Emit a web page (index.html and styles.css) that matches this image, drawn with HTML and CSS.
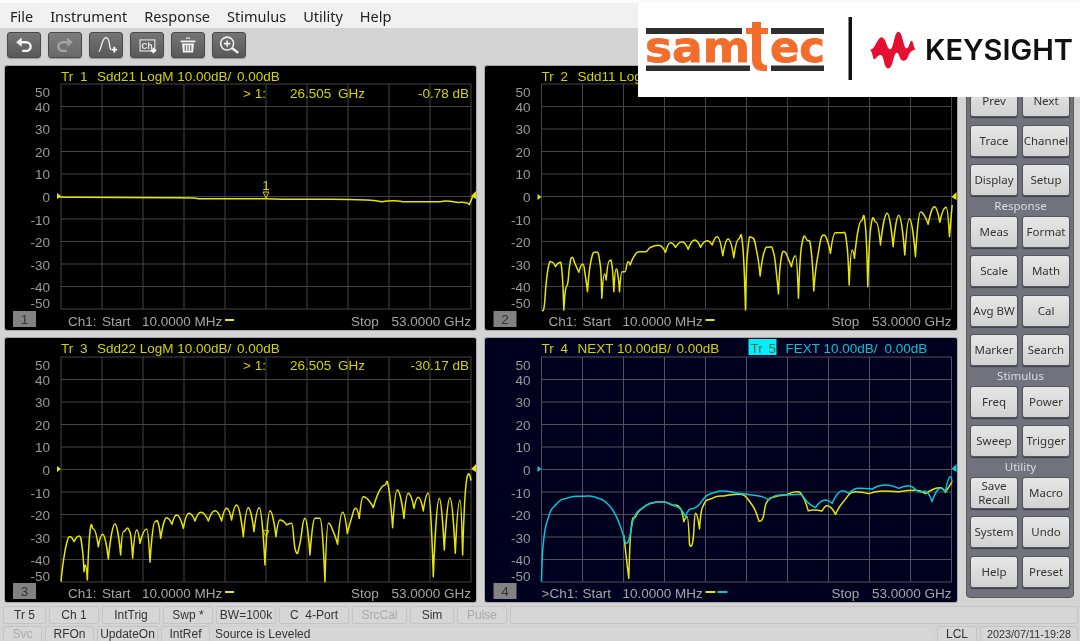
FILE: index.html
```html
<!DOCTYPE html>
<html lang="en">
  <head>
    <meta charset="UTF-8" />
    <meta name="viewport" content="width=device-width, initial-scale=1.0" />
    <title>Network Analyzer</title>
    <link rel="stylesheet" href="styles.css">
  </head>
  <body>
    <div class="app">
      <nav class="menu-bar">
        <span>File</span>
        <span>Instrument</span>
        <span>Response</span>
        <span>Stimulus</span>
        <span>Utility</span>
        <span>Help</span>
      </nav>

      <div class="tool-bar">
        <button class="tool-btn">
          <svg viewBox="0 0 34 26"><path class="ico-line" d="M13 10h6.500a4.700 4.700 0 0 1 0 9.400H15"/><path class="ico-fill" d="M8.500 10l6-5v10z"/></svg>
        </button>
        <button class="tool-btn off">
          <svg viewBox="0 0 34 26"><path class="ico-line" d="M21 10h-6.500a4.700 4.700 0 0 0 0 9.400H19"/><path class="ico-fill" d="M25.500 10l-6-5v10z"/></svg>
        </button>
        <button class="tool-btn">
          <svg viewBox="0 0 34 26"><path class="ico-thin" d="M9 20c3 0 3-15 8-15s3 12 5.500 13"/><path class="ico-plus" d="M26 15v6M23 18h6"/></svg>
        </button>
        <button class="tool-btn">
          <svg viewBox="0 0 34 26"><rect class="ico-box" x="9.500" y="7.500" width="16" height="12"/><text class="ico-text" x="11" y="17">Ch</text><path class="ico-plus" d="M24 16v6M21 19h6"/></svg>
        </button>
        <button class="tool-btn">
          <svg viewBox="0 0 34 26"><path class="ico-fill" d="M9 8h16v2H9zM14.500 6.500a2.500 2 0 0 1 5 0h-1.500a1 .8 0 0 0-2 0zM10.500 11.500h13l-1 9.500h-11z"/><path class="ico-cut" d="M14 13v6.500M17 13v6.500M20 13v6.500"/></svg>
        </button>
        <button class="tool-btn">
          <svg viewBox="0 0 34 26"><circle class="ico-ring" cx="15" cy="11.500" r="7"/><path class="ico-ring" d="M11.500 11.500h7M15 8v7"/><path class="ico-line" d="M20.500 16.500l6.500 5"/></svg>
        </button>
      </div>

      <div class="work-area">
        <div class="charts">
          <section class="chart">
            <svg viewBox="0 0 471 264">
              <defs>
                <path id="grid" d="M56 0H466V225H56ZM97 0V225M138 0V225M179 0V225M220 0V225M261 0V225M302 0V225M343 0V225M384 0V225M425 0V225M56 22.500H466M56 45H466M56 67.500H466M56 90H466M56 112.500H466M56 135H466M56 157.500H466M56 180H466M56 202.500H466"/>
              </defs>
              <g transform="translate(0 18)">
                <use class="grid-line" href="#grid"/>
                <text class="axis"><tspan x="45" y="13">50</tspan><tspan x="45" y="28">40</tspan><tspan x="45" y="50">30</tspan><tspan x="45" y="72.500">20</tspan><tspan x="45" y="95">10</tspan><tspan x="45" y="118">0</tspan><tspan x="45" y="140.500">-10</tspan><tspan x="45" y="163">-20</tspan><tspan x="45" y="185.500">-30</tspan><tspan x="45" y="208">-40</tspan><tspan x="45" y="224">-50</tspan></text>
              </g>
              <text class="label"><tspan x="56" y="14.500">Tr</tspan><tspan x="75" y="14.500">1</tspan><tspan x="92" y="14.500">Sdd21 LogM 10.00dB/</tspan><tspan x="232" y="14.500">0.00dB</tspan></text>
              <text class="label"><tspan x="238" y="32">&gt; 1:</tspan><tspan x="285" y="32">26.505</tspan><tspan x="333" y="32">GHz</tspan></text>
              <text class="label end" x="464" y="32">-0.78 dB</text>
              <path class="mark" d="M52 127l4 3-4 3zM471 125l-5 5 5 3z"/>
              <text class="label mid" x="261" y="124">1</text>
              <path class="mark-open" d="M258 126h6l-3 6z"/>
              <g transform="translate(-5 -6) scale(.3333)">
                <path class="trace yellow" data-points="175,411 235,412 500,413 580,414 595,416 800,416 850,418 950,418 1100,420 1145,425 1180,422 1210,425 1320,425 1340,423 1370,427 1400,428 1408,434 1418,410"/>
              </g>
              <rect class="num-box" x="8" y="245" width="23" height="16"/>
              <text class="num" x="19.500" y="258">1</text>
              <text class="foot"><tspan x="63" y="260">Ch1:</tspan><tspan x="97" y="260">Start</tspan><tspan x="137" y="260">10.0000 MHz</tspan></text>
              <text class="foot" x="346" y="260">Stop</text>
              <text class="foot end" x="466" y="260">53.0000 GHz</text>
              <path class="dash-y" d="M220 254h9"/>
            </svg>
          </section>

          <section class="chart">
            <svg viewBox="0 0 471 264">
              <g transform="translate(0 18)">
                <use class="grid-line" href="#grid"/>
                <text class="axis"><tspan x="45" y="13">50</tspan><tspan x="45" y="28">40</tspan><tspan x="45" y="50">30</tspan><tspan x="45" y="72.500">20</tspan><tspan x="45" y="95">10</tspan><tspan x="45" y="118">0</tspan><tspan x="45" y="140.500">-10</tspan><tspan x="45" y="163">-20</tspan><tspan x="45" y="185.500">-30</tspan><tspan x="45" y="208">-40</tspan><tspan x="45" y="224">-50</tspan></text>
              </g>
              <text class="label"><tspan x="56" y="14.500">Tr</tspan><tspan x="75" y="14.500">2</tspan><tspan x="92" y="14.500">Sdd11 LogM 10.00dB/</tspan><tspan x="232" y="14.500">0.00dB</tspan></text>
              <path class="mark" d="M52 128l4 3-4 3zM471 126l-5 5 5 3z"/>
              <g transform="translate(0 24) scale(.3333)">
                <path class="trace yellow" data-points="170,660 176,650 182,580 190,525 198,516 210,530 222,518 230,550 235,660 240,600 247,578 252,530 260,502 268,520 280,547 292,522 300,560 306,605 315,520 330,487 345,530 349,625 357,552 362,570 372,512 380,530 385,605 392,537 398,560 402,605 410,545 418,545 428,515 434,525 445,500 460,485 480,485 495,472 520,466 540,487 555,458 570,472 590,455 608,478 628,450 645,472 665,452 680,465 695,440 712,497 728,447 745,503 760,447 772,470 780,660 785,500 800,443 815,490 824,558 835,490 850,472 865,490 875,570 879,612 885,520 897,485 908,505 918,530 930,497 939,625 948,470 968,452 978,490 985,603 995,510 1015,435 1035,490 1050,428 1072,428 1085,470 1091,585 1100,480 1107,505 1128,392 1140,410 1147,590 1155,420 1172,397 1185,465 1205,370 1223,470 1240,376 1258,495 1272,386 1290,500 1305,366 1328,403 1347,350 1363,397 1382,352 1392,440 1400,345"/>
              </g>
              <rect class="num-box" x="8" y="245" width="23" height="16"/>
              <text class="num" x="19.500" y="258">2</text>
              <text class="foot"><tspan x="63" y="260">Ch1:</tspan><tspan x="97" y="260">Start</tspan><tspan x="137" y="260">10.0000 MHz</tspan></text>
              <text class="foot" x="346" y="260">Stop</text>
              <text class="foot end" x="466" y="260">53.0000 GHz</text>
              <path class="dash-y" d="M220 254h9"/>
            </svg>
          </section>

          <section class="chart">
            <svg viewBox="0 0 471 264">
              <g transform="translate(0 19)">
                <use class="grid-line" href="#grid"/>
                <text class="axis"><tspan x="45" y="13">50</tspan><tspan x="45" y="28">40</tspan><tspan x="45" y="50">30</tspan><tspan x="45" y="72.500">20</tspan><tspan x="45" y="95">10</tspan><tspan x="45" y="118">0</tspan><tspan x="45" y="140.500">-10</tspan><tspan x="45" y="163">-20</tspan><tspan x="45" y="185.500">-30</tspan><tspan x="45" y="208">-40</tspan><tspan x="45" y="224">-50</tspan></text>
              </g>
              <text class="label"><tspan x="56" y="14.500">Tr</tspan><tspan x="75" y="14.500">3</tspan><tspan x="92" y="14.500">Sdd22 LogM 10.00dB/</tspan><tspan x="232" y="14.500">0.00dB</tspan></text>
              <text class="label"><tspan x="238" y="32">&gt; 1:</tspan><tspan x="285" y="32">26.505</tspan><tspan x="333" y="32">GHz</tspan></text>
              <text class="label end" x="464" y="32">-30.17 dB</text>
              <path class="mark" d="M52 128l4 3-4 3zM471 126l-5 5 5 3z"/>
              <g transform="translate(-5 -3) scale(.3333)">
                <path class="trace yellow" data-points="183,740 190,680 200,625 210,605 222,620 238,603 248,650 252,710 256,690 262,735 270,590 280,582 295,635 308,598 325,672 345,567 362,660 370,590 390,592 398,670 410,585 420,625 440,582 450,682 465,560 475,565 482,610 500,548 516,568 530,540 550,580 567,535 585,558 603,532 625,558 645,527 665,558 680,520 695,555 710,510 730,605 745,518 762,590 778,518 795,690 810,527 828,605 840,555 860,570 875,565 885,640 893,655 900,625 915,550 930,660 945,550 960,550 975,740 985,565 1000,590 1013,628 1028,532 1042,595 1055,548 1067,520 1078,550 1090,485 1120,518 1155,450 1165,452 1178,578 1192,465 1212,550 1225,475 1242,520 1255,487 1270,528 1285,475 1300,725 1318,490 1333,645 1350,488 1366,655 1380,495 1388,660 1398,450 1413,437"/>
                <path class="mark-open big" d="M789 587h18l-9 18z"/>
              </g>
              <rect class="num-box" x="8" y="245" width="23" height="16"/>
              <text class="num" x="19.500" y="258">3</text>
              <text class="foot"><tspan x="63" y="260">Ch1:</tspan><tspan x="97" y="260">Start</tspan><tspan x="137" y="260">10.0000 MHz</tspan></text>
              <text class="foot" x="346" y="260">Stop</text>
              <text class="foot end" x="466" y="260">53.0000 GHz</text>
              <path class="dash-y" d="M220 254h9"/>
            </svg>
          </section>

          <section class="chart navy">
            <svg viewBox="0 0 471 264">
              <g transform="translate(0 19)">
                <use class="grid-line" href="#grid"/>
                <text class="axis"><tspan x="45" y="13">50</tspan><tspan x="45" y="28">40</tspan><tspan x="45" y="50">30</tspan><tspan x="45" y="72.500">20</tspan><tspan x="45" y="95">10</tspan><tspan x="45" y="118">0</tspan><tspan x="45" y="140.500">-10</tspan><tspan x="45" y="163">-20</tspan><tspan x="45" y="185.500">-30</tspan><tspan x="45" y="208">-40</tspan><tspan x="45" y="224">-50</tspan></text>
              </g>
              <text class="label"><tspan x="56" y="14.500">Tr</tspan><tspan x="75" y="14.500">4</tspan><tspan x="92" y="14.500">NEXT 10.00dB/</tspan><tspan x="191" y="14.500">0.00dB</tspan></text>
              <rect class="tr-tag" x="263" y="1" width="28" height="16"/>
              <text class="tag-text"><tspan x="265" y="14.500">Tr</tspan><tspan x="283" y="14.500">5</tspan></text>
              <text class="label cyan-text"><tspan x="300" y="14.500">FEXT 10.00dB/</tspan><tspan x="399" y="14.500">0.00dB</tspan></text>
              <path class="mark cyan-fill" d="M52 128l4 3-4 3zM471 126l-5 5 5 3z"/>
              <g transform="translate(0 -3) scale(.3333)">
                <path class="trace yellow" data-points="415,600 425,690 430,730 436,590 450,545 470,520 495,505 530,500 560,510 585,520 595,560 605,545 612,628 622,620 630,535 642,582 650,520 680,490 720,482 760,478 800,510 820,557 832,550 842,505 870,485 900,480 935,470 955,490 968,527 985,525 1010,528 1025,512 1050,538 1070,505 1110,470 1150,476 1190,468 1240,470 1290,466 1320,476 1345,462 1365,458 1380,472 1400,440"/>
                <path class="trace cyan" data-points="168,740 172,640 185,560 210,510 250,488 290,484 330,487 370,510 395,550 410,590 420,625 430,615 445,550 470,520 495,505 530,500 560,510 585,522 600,545 610,525 625,520 640,510 660,485 680,475 710,468 760,475 800,480 830,485 850,495 870,482 900,480 940,478 970,505 990,518 1020,495 1040,505 1070,468 1090,475 1120,460 1160,462 1200,450 1240,460 1270,452 1300,470 1325,472 1340,500 1365,460 1380,470 1395,425 1400,440"/>
              </g>
              <rect class="num-box" x="8" y="245" width="23" height="16"/>
              <text class="num" x="19.500" y="258">4</text>
              <text class="foot"><tspan x="56" y="260">&gt;Ch1:</tspan><tspan x="97" y="260">Start</tspan><tspan x="137" y="260">10.0000 MHz</tspan></text>
              <text class="foot" x="346" y="260">Stop</text>
              <text class="foot end" x="466" y="260">53.0000 GHz</text>
              <path class="dash-y" d="M220 254h10"/>
              <path class="dash-c" d="M232 254h10"/>
            </svg>
          </section>
        </div>

        <aside class="soft-keys">
          <div class="key-group">
            <button class="key">Prev</button>
            <button class="key">Next</button>
            <button class="key">Trace</button>
            <button class="key">Channel</button>
            <button class="key">Display</button>
            <button class="key">Setup</button>
          </div>
          <div class="key-title">Response</div>
          <div class="key-group">
            <button class="key">Meas</button>
            <button class="key">Format</button>
            <button class="key">Scale</button>
            <button class="key">Math</button>
            <button class="key">Avg BW</button>
            <button class="key">Cal</button>
            <button class="key">Marker</button>
            <button class="key">Search</button>
          </div>
          <div class="key-title">Stimulus</div>
          <div class="key-group">
            <button class="key">Freq</button>
            <button class="key">Power</button>
            <button class="key">Sweep</button>
            <button class="key">Trigger</button>
          </div>
          <div class="key-title">Utility</div>
          <div class="key-group">
            <button class="key">Save<br>Recall</button>
            <button class="key">Macro</button>
            <button class="key">System</button>
            <button class="key">Undo</button>
            <button class="key">Help</button>
            <button class="key">Preset</button>
          </div>
        </aside>
      </div>

      <div class="status-top">
        <div class="cell">Tr 5</div>
        <div class="cell">Ch 1</div>
        <div class="cell">IntTrig</div>
        <div class="cell">Swp *</div>
        <div class="cell">BW=100k</div>
        <div class="cell">C&nbsp; 4-Port</div>
        <div class="cell dim">SrcCal</div>
        <div class="cell">Sim</div>
        <div class="cell dim">Pulse</div>
        <div class="cell"></div>
      </div>
      <div class="status-bottom">
        <div class="cell dim">Svc</div>
        <div class="cell">RFOn</div>
        <div class="cell">UpdateOn</div>
        <div class="cell">IntRef</div>
        <div class="cell message">Source is Leveled</div>
        <div class="cell">LCL</div>
        <div class="cell date">2023/07/11-19:28</div>
      </div>

      <div class="logo-box">
        <svg viewBox="638 3 442 94">
          <path class="sam-bar" d="M646 28h96v6h-96zM771 28h53v6h-53zM646 65.500h104v5.500H646zM771 65.500h53v5.500h-53z"/>
          <text class="sam-text" x="645" y="62" textLength="105" lengthAdjust="spacingAndGlyphs">sam</text>
          <text class="sam-text" x="770" y="62" textLength="55" lengthAdjust="spacingAndGlyphs">ec</text>
          <path class="sam-t" d="M752 22h9v6h7v6h-7v25q0 6 6 6v6h-4q-11 0-11-12V34h-6v-6h6z"/>
          <path class="divider" d="M848.500 17h3.500v63h-3.500z"/>
          <g transform="translate(860 20) scale(.3333)">
            <path class="wave" d="M30 90C45 90 52 52 65 52C78 52 80 88 90 88C102 88 102 35 115 35C128 35 130 85 140 85C148 85 148 62 155 62C160 62 160 84 167 88C155 92 150 96 145 108C140 120 135 124 128 122C118 118 118 98 110 98C100 98 100 145 85 145C70 145 74 108 62 105C52 104 48 118 43 118C38 118 38 94 30 90Z"/>
          </g>
          <text class="key-text" x="925" y="60" textLength="148" lengthAdjust="spacingAndGlyphs">KEYSIGHT</text>
        </svg>
      </div>
    </div>
    <script src="traces.js"></script>
  </body>
</html>
```

FILE: styles.css
```css
* {
    box-sizing: border-box;
}

html,
body {
    margin: 0;
    height: 100%;
    overflow: hidden;
}

svg {
    display: block;
    width: 100%;
    height: 100%;
}

button {
    margin: 0;
    padding: 0;
    font: inherit;
}

.app {
    position: relative;
    width: 1080px;
    height: 641px;
    overflow: hidden;
    background: #d4d4d4;
    font-family: "Liberation Sans", sans-serif;
    filter: blur(0.35px);
}

/* menu + toolbar */
.menu-bar {
    display: flex;
    gap: 17px;
    height: 28px;
    padding-left: 10px;
    background: #f1f1f1;
    border-top: 3px solid #fafafa;
    font-family: "Noto Sans", sans-serif;
    font-size: 14.5px;
    line-height: 26px;
    color: #222;
}

.tool-bar {
    display: flex;
    gap: 7px;
    height: 38px;
    padding: 4px 0 0 7px;
}

.tool-btn {
    width: 34px;
    height: 26px;
    border: 1px solid #4a4a4a;
    border-radius: 3px;
    background: linear-gradient(#757575, #595959);
    box-shadow: 0 1px 1px #999;
}

.tool-btn.off {
    background: linear-gradient(#7c7c7c, #6a6a6a);
}

.ico-line {
    fill: none;
    stroke: #f2f2f2;
    stroke-width: 2.6;
}

.ico-fill {
    fill: #f2f2f2;
}

.off .ico-line {
    stroke: #a4a4a4;
}

.off .ico-fill {
    fill: #a4a4a4;
}

.ico-thin {
    fill: none;
    stroke: #f2f2f2;
    stroke-width: 1.4;
}

.ico-ring {
    fill: none;
    stroke: #f2f2f2;
    stroke-width: 1.7;
}

.ico-plus {
    fill: none;
    stroke: #fff;
    stroke-width: 2;
}

.ico-box {
    fill: #666;
    stroke: #e8e8e8;
    stroke-width: 1.2;
}

.ico-text {
    fill: #eee;
    font-size: 9px;
    font-weight: bold;
}

.ico-cut {
    stroke: #666;
    stroke-width: 1.2;
}

/* charts */
.work-area {
    display: flex;
    height: 536px;
    padding-left: 5px;
}

.charts {
    display: grid;
    grid-template-columns: 471px 472px;
    grid-template-rows: 264px 264px;
    gap: 8px 9px;
}

.chart {
    background: #000;
    border-radius: 2px;
    box-shadow: 0 0 0 1px #a8a8a8;
    overflow: hidden;
}

.chart.navy {
    background: #00001f;
}

.chart text {
    font-family: "Liberation Sans", sans-serif;
    font-size: 13.5px;
    white-space: pre;
}

.grid-line {
    fill: none;
    stroke: #444;
    stroke-width: 1;
}

.navy .grid-line {
    stroke: #52525c;
}

.axis {
    fill: #9a9a9a;
    text-anchor: end;
}

.label {
    fill: #d2d200;
}

.cyan-text {
    fill: #00c4d6;
}

.end {
    text-anchor: end;
}

.mid {
    text-anchor: middle;
}

.foot {
    fill: #a6a6a6;
}

.mark {
    fill: #e6e600;
}

.cyan-fill {
    fill: #00d0e0;
}

.mark-open {
    fill: none;
    stroke: #d2d200;
    stroke-width: 1;
}

.mark-open.big {
    stroke-width: 3;
}

.trace {
    fill: none;
    stroke-width: 4.5;
    stroke-linejoin: round;
}

.yellow {
    stroke: #e6e600;
}

.cyan {
    stroke: #00c8dc;
}

.num-box {
    fill: #828282;
}

.num {
    fill: #333;
    text-anchor: middle;
}

.dash-y,
.dash-c {
    fill: none;
    stroke-width: 2;
}

.dash-y {
    stroke: #e6e600;
}

.dash-c {
    stroke: #00c8dc;
}

.tr-tag {
    fill: #00f0ff;
}

.tag-text {
    fill: #5a6a40;
}

/* right side keys */
.soft-keys {
    width: 108px;
    height: 532px;
    margin-left: 9px;
    padding: 18px 2px 0 3px;
    background: #72727e;
    border: 1px solid #5c5c48;
    border-radius: 4px;
}

.key-group {
    display: grid;
    grid-template-columns: 48px 48px;
    grid-auto-rows: 32px;
    gap: 7.5px 4px;
}

.key-title {
    height: 19.5px;
    font-family: "Noto Sans", sans-serif;
    font-size: 11.5px;
    line-height: 20px;
    text-align: center;
    color: #dcdce4;
}

.key {
    border: 1px solid #55555a;
    border-radius: 3px;
    background: linear-gradient(#e6e6e6, #d2d2d2);
    box-shadow: 0 1px 1px #3c3c44;
    font-family: "Noto Sans", sans-serif;
    font-size: 11.5px;
    line-height: 14px;
    color: #333;
}

/* status rows */
.status-top,
.status-bottom {
    display: grid;
    gap: 3px;
    padding: 0 2px 0 3px;
}

.status-top {
    grid-template-columns: 43px 50px 58px 50px 60px 70px 55px 44px 50px 1fr;
    height: 18px;
    margin: 4px 0 2px;
}

.status-bottom {
    grid-template-columns: 39px 49px 61px 49px 721px 40px 1fr;
    height: 18px;
}

.cell {
    border: 1px solid #c4c4c4;
    border-radius: 2px;
    background: #d6d6d6;
    font-size: 12px;
    line-height: 16px;
    text-align: center;
    color: #333;
}

.status-bottom .cell {
    line-height: 14px;
}

.cell.dim {
    color: #aaa;
}

.cell.message {
    text-align: left;
    padding-left: 1px;
    border-color: #d0d0d0;
}

.cell.date {
    font-size: 10.8px;
}

/* logos on top of the screenshot */
.logo-box {
    position: absolute;
    top: 3px;
    left: 638px;
    width: 442px;
    height: 94px;
    background: #fff;
}

.sam-bar {
    fill: #2e2e2e;
}

.sam-text {
    fill: #f26c2c;
    stroke: #f26c2c;
    stroke-width: 0.8;
    font-family: "DejaVu Sans", sans-serif;
    font-size: 42px;
    font-weight: bold;
}

.sam-t {
    fill: #f26c2c;
}

.divider {
    fill: #111;
}

.wave {
    fill: #e60f32;
}

.key-text {
    fill: #111;
    font-family: "Inter", sans-serif;
    font-size: 29px;
    font-weight: 600;
}
```

FILE: traces.js
```js
// builds the trace curves: round tops, sharp nulls
const traces = document.querySelectorAll(".trace");

const slopeAt = (pts, i) => {
  const p = pts[i];
  const prev = pts[i - 1];
  const next = pts[i + 1];
  if (!prev || !next) return { m: 0, cusp: true };

  const d1 = p[1] - prev[1];
  const d2 = next[1] - p[1];

  if (d1 * d2 > 0) return { m: (next[1] - prev[1]) / (next[0] - prev[0]), cusp: false };
  // svg y points down, so this is a null
  if (d1 > 0) return { m: 0, cusp: true };
  return { m: 0, cusp: false };
};

traces.forEach((t) => {
  const pts = t.dataset.points.split(" ").map((s) => s.split(",").map(Number));
  let d = `M${pts[0][0]} ${pts[0][1]}`;

  for (let i = 0; i < pts.length - 1; i++) {
    const a = pts[i];
    const b = pts[i + 1];
    const h = (b[0] - a[0]) / 2;
    const sa = slopeAt(pts, i);
    const sb = slopeAt(pts, i + 1);
    const c1 = sa.cusp ? a : [a[0] + h, a[1] + sa.m * h];
    const c2 = sb.cusp ? b : [b[0] - h, b[1] - sb.m * h];
    d += `C${c1[0]} ${c1[1]} ${c2[0]} ${c2[1]} ${b[0]} ${b[1]}`;
  }

  t.setAttribute("d", d);
});
```
